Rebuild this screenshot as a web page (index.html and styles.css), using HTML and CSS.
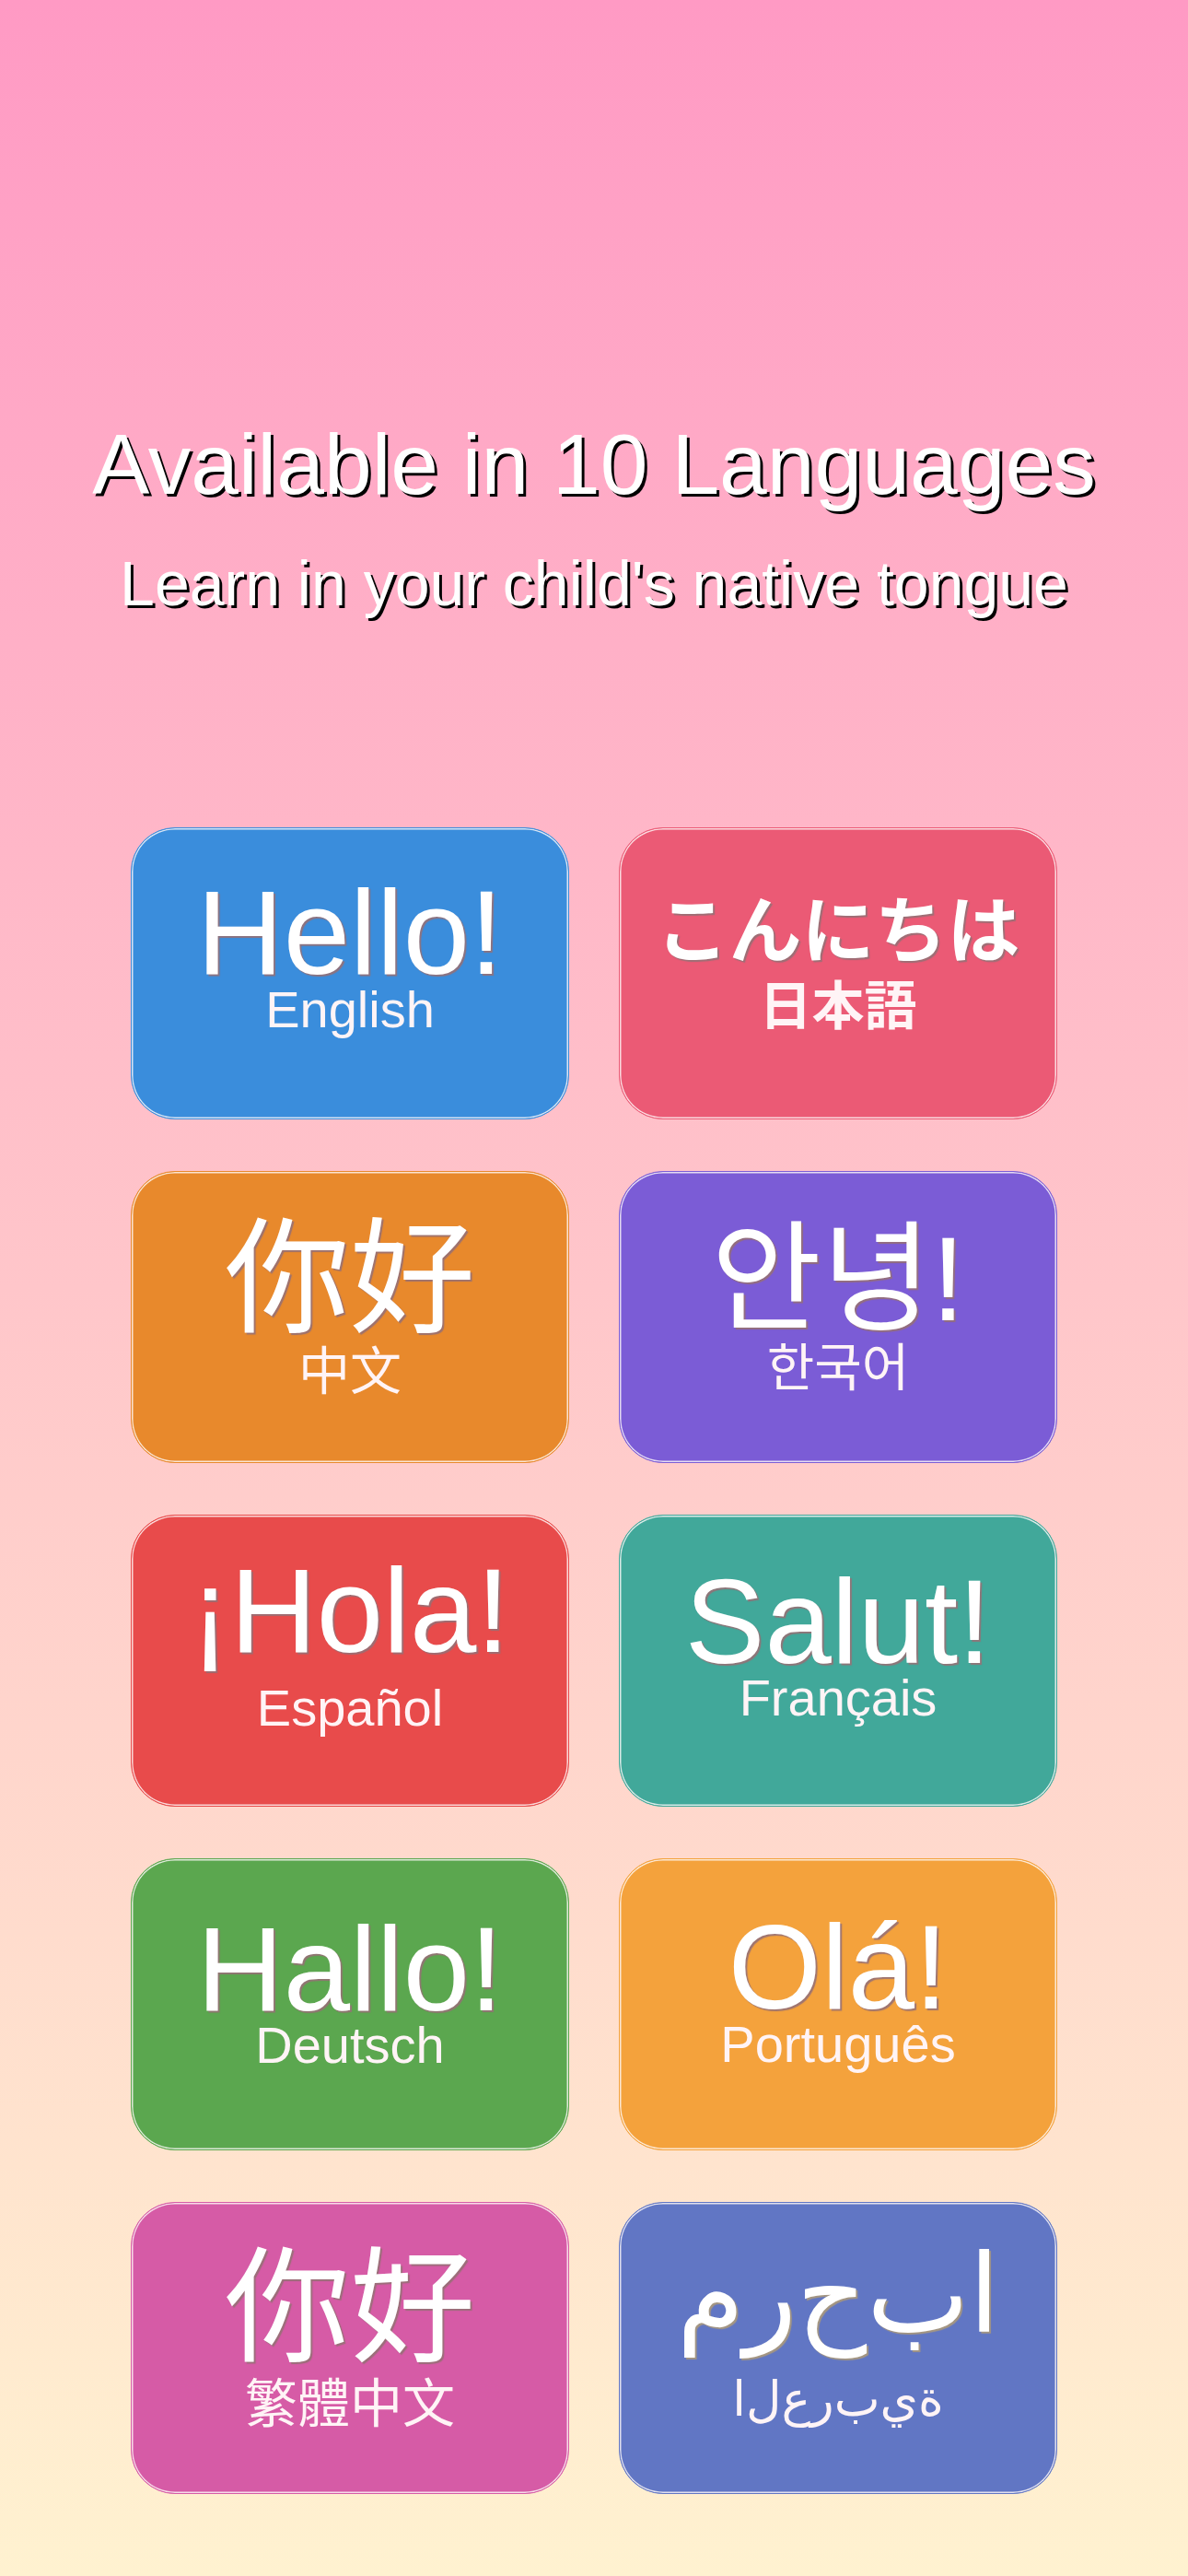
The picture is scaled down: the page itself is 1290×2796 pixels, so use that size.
FILE: index.html
```html
<!DOCTYPE html>
<html lang="en">
<head>
<meta charset="utf-8">
<title>Available in 10 Languages</title>
<link rel="stylesheet" href="styles.css">
</head>
<body>
<main class="page">
  <header class="header">
    <h1 class="title">Available in 10 Languages</h1>
    <p class="subtitle">Learn in your child's native tongue</p>
  </header>
  <section class="grid">
    <div class="card card--en"><span class="main">Hello!</span><span class="sub">English</span></div>
    <div class="card card--ja"><span class="main">こんにちは</span><span class="sub">日本語</span></div>
    <div class="card card--zh"><span class="main">你好</span><span class="sub">中文</span></div>
    <div class="card card--ko"><span class="main">안녕!</span><span class="sub">한국어</span></div>
    <div class="card card--es"><span class="main">¡Hola!</span><span class="sub">Español</span></div>
    <div class="card card--fr"><span class="main">Salut!</span><span class="sub">Français</span></div>
    <div class="card card--de"><span class="main">Hallo!</span><span class="sub">Deutsch</span></div>
    <div class="card card--pt"><span class="main">Olá!</span><span class="sub">Português</span></div>
    <div class="card card--tw"><span class="main">你好</span><span class="sub">繁體中文</span></div>
    <div class="card card--ar"><span class="main">&#xFEE1;&#xFEAD;&#xFEA1;&#xFE8F;&#xFE8D;</span><span class="sub">&#xFE8D;&#xFEDD;&#xFEC9;&#xFEAD;&#xFE8F;&#xFEF1;&#xFE93;</span></div>
  </section>
</main>
</body>
</html>
```
FILE: styles.css
```css
html, body {
  margin: 0;
  padding: 0;
}

body {
  background: #fff2d0;
  font-family: "Liberation Sans", Arial, sans-serif;
}

.page {
  min-height: 2796px;
  box-sizing: border-box;
  background: linear-gradient(to bottom, #ff9ac4 0%, #fff2d0 100%);
  padding-top: 458px;
  overflow: hidden;
}

.header {
  display: flex;
  flex-direction: column;
  align-items: center;
  color: #fff;
}

.title {
  margin: 0;
  font-size: 93px;
  line-height: 93px;
  font-weight: 400;
  white-space: nowrap;
  text-shadow: 3px 3px 0 #000;
}

.subtitle {
  margin: 48px 0 0;
  font-size: 68px;
  line-height: 68px;
  white-space: nowrap;
  text-shadow: 3px 3px 0 #000;
}

.grid {
  margin-top: 231px;
  display: grid;
  grid-template-columns: 476px 476px;
  grid-auto-rows: 317px;
  column-gap: 54px;
  row-gap: 56px;
  justify-content: center;
}

.card {
  --c: #3a8ddc;
  box-sizing: border-box;
  height: 317px;
  background: var(--c);
  border: 1px solid var(--c);
  border-radius: 48px;
  box-shadow: inset 0 0 0 1.5px rgba(255, 250, 250, 0.8);
  padding-top: 53px;
  display: flex;
  flex-direction: column;
  align-items: center;
  color: #fff;
}

.main {
  font-size: 130px;
  line-height: 120px;
  white-space: nowrap;
  text-shadow: 2px 2px 1px rgba(150, 112, 118, 0.9);
}

.sub {
  font-size: 56px;
  line-height: 46px;
  margin-top: 1px;
  white-space: nowrap;
  color: #fff4f6;
}

/* per-language */
.card--en { --c: #3a8ddc; }

.card--ja { --c: #eb5a75; font-family: "Liberation Sans", "Noto Sans CJK JP", sans-serif; }
.card--ja .main { font-size: 79px; font-weight: 700; }
.card--ja .sub { font-size: 57px; font-weight: 700; margin-top: -3px; }

.card--zh { --c: #e8892c; font-family: "Liberation Sans", "Noto Sans CJK SC", sans-serif; }
.card--zh .main { font-size: 136px; margin-top: 4px; }
.card--zh .sub { margin-top: 17px; }

.card--ko { --c: #7b5cd6; font-family: "Liberation Sans", "Noto Sans CJK KR", sans-serif; }
.card--ko .main { margin-top: 3px; }
.card--ko .sub { margin-top: 14px; }

.card--es { --c: #e84b4b; }
.card--es .main { margin-top: -10px; }
.card--es .sub { margin-top: 23px; }

.card--fr { --c: #41a89a; }
.card--fr .main { margin-top: 2px; }
.card--fr .sub { margin-top: 0; }

.card--de { --c: #5ba74f; }
.card--de .main { margin-top: 6px; }
.card--de .sub { margin-top: 0; }

.card--pt { --c: #f4a23c; }
.card--pt .main { margin-top: 4px; }
.card--pt .sub { margin-top: 1px; }

.card--tw { --c: #d65ba6; font-family: "Liberation Sans", "Noto Sans CJK TC", sans-serif; }
.card--tw .main { font-size: 136px; margin-top: 2px; }
.card--tw .sub { font-size: 57px; margin-top: 20px; }

.card--ar { --c: #6176c4; font-family: "DejaVu Sans", sans-serif; }
.card--ar .main {
  font-size: 118px;
  margin-top: -14px;
  direction: ltr;
  unicode-bidi: bidi-override;
  text-shadow: 2px 2px 1px rgba(168, 152, 126, 0.95);
}
.card--ar .sub {
  font-size: 53px;
  margin-top: 31px;
  direction: ltr;
  unicode-bidi: bidi-override;
}
```
